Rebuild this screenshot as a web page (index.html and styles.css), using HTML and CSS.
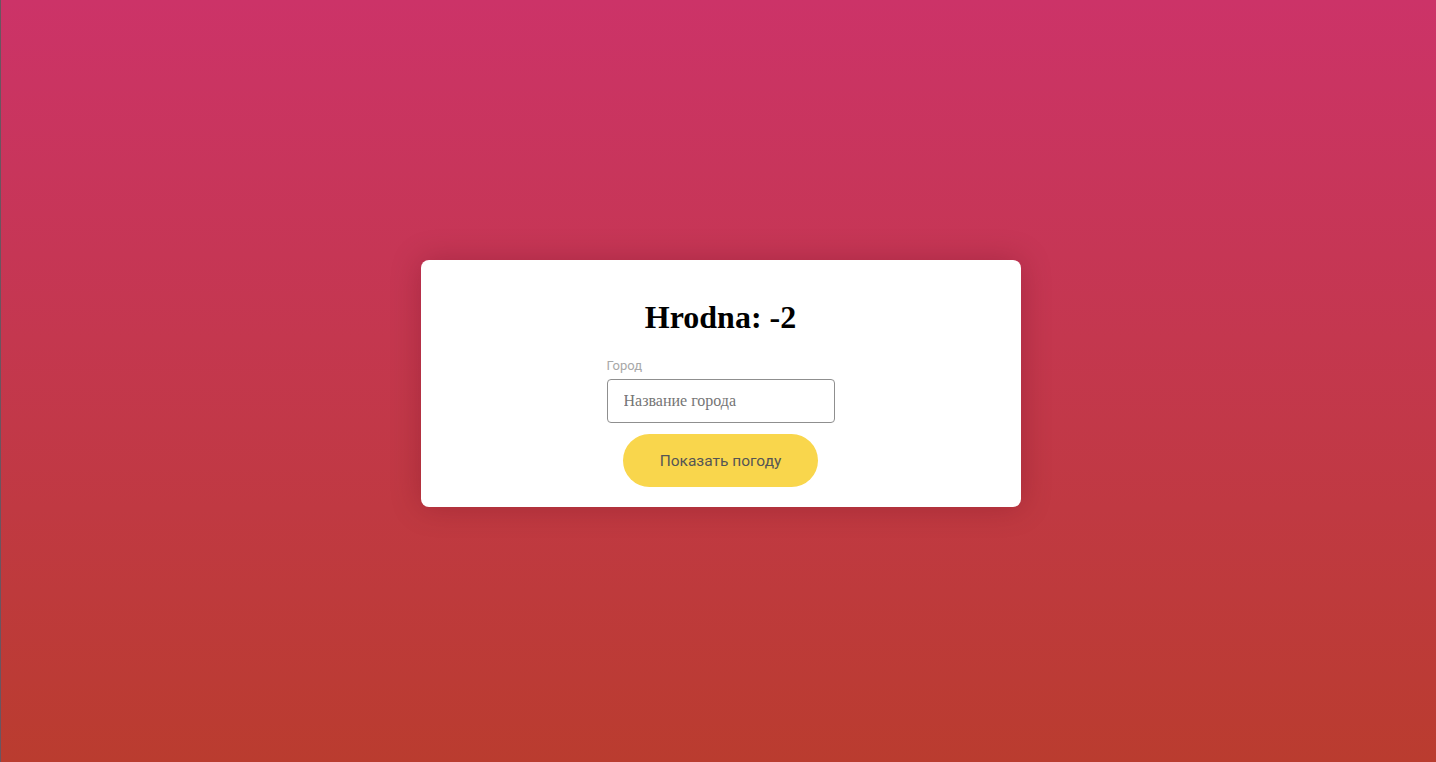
FILE: index.html
```html
<!DOCTYPE html>
<html lang="ru">
<head>
<meta charset="utf-8">
<title>Погода</title>
<link rel="stylesheet" href="styles.css">
</head>
<body>
<main class="page">
  <section class="card">
    <h1 class="title">Hrodna: -2</h1>
    <form class="form">
      <label class="label" for="city">Город</label>
      <input class="input" id="city" type="text" placeholder="Название города">
      <button class="button" type="button">Показать погоду</button>
    </form>
  </section>
</main>
</body>
</html>
```
FILE: styles.css
```css
html, body {
  margin: 0;
  height: 100%;
}
body {
  font-family: "Liberation Serif", "Times New Roman", serif;
  border-left: 1px solid #6a5560;
  box-sizing: border-box;
  background: linear-gradient(to bottom, #cc3368, #ba3c2f);
}
.page {
  height: 100%;
  box-sizing: border-box;
  padding: 5px 0 0 4px;
  display: flex;
  align-items: center;
  justify-content: center;
}
.card {
  width: 600px;
  box-sizing: border-box;
  background: #fff;
  border-radius: 8px;
  padding: 18px 20px 20px;
  box-shadow: 0 0 30px rgba(80, 0, 20, 0.25);
  display: flex;
  flex-direction: column;
  align-items: center;
}
.title {
  font-family: "Liberation Serif", "Times New Roman", serif;
  font-size: 32px;
  font-weight: bold;
  margin: 21px 0 22px;
  color: #000;
}
.form {
  width: 228px;
  display: flex;
  flex-direction: column;
}
.label {
  font-family: Roboto, "Liberation Sans", sans-serif;
  font-size: 13px;
  line-height: 15px;
  color: #a8a8a8;
  margin-bottom: 6px;
}
.input {
  height: 44px;
  box-sizing: border-box;
  border: 1px solid #8f8f8f;
  border-radius: 4px;
  padding: 0 16px;
  font-family: "Liberation Serif", "Times New Roman", serif;
  font-size: 16px;
  color: #333;
}
.input::placeholder {
  color: #757575;
}
.button {
  align-self: center;
  margin-top: 11px;
  width: 195px;
  height: 53px;
  border: none;
  border-radius: 27px;
  background: #f9d64c;
  font-family: Roboto, "Liberation Sans", sans-serif;
  font-size: 15.5px;
  color: #555;
  cursor: pointer;
}
```
